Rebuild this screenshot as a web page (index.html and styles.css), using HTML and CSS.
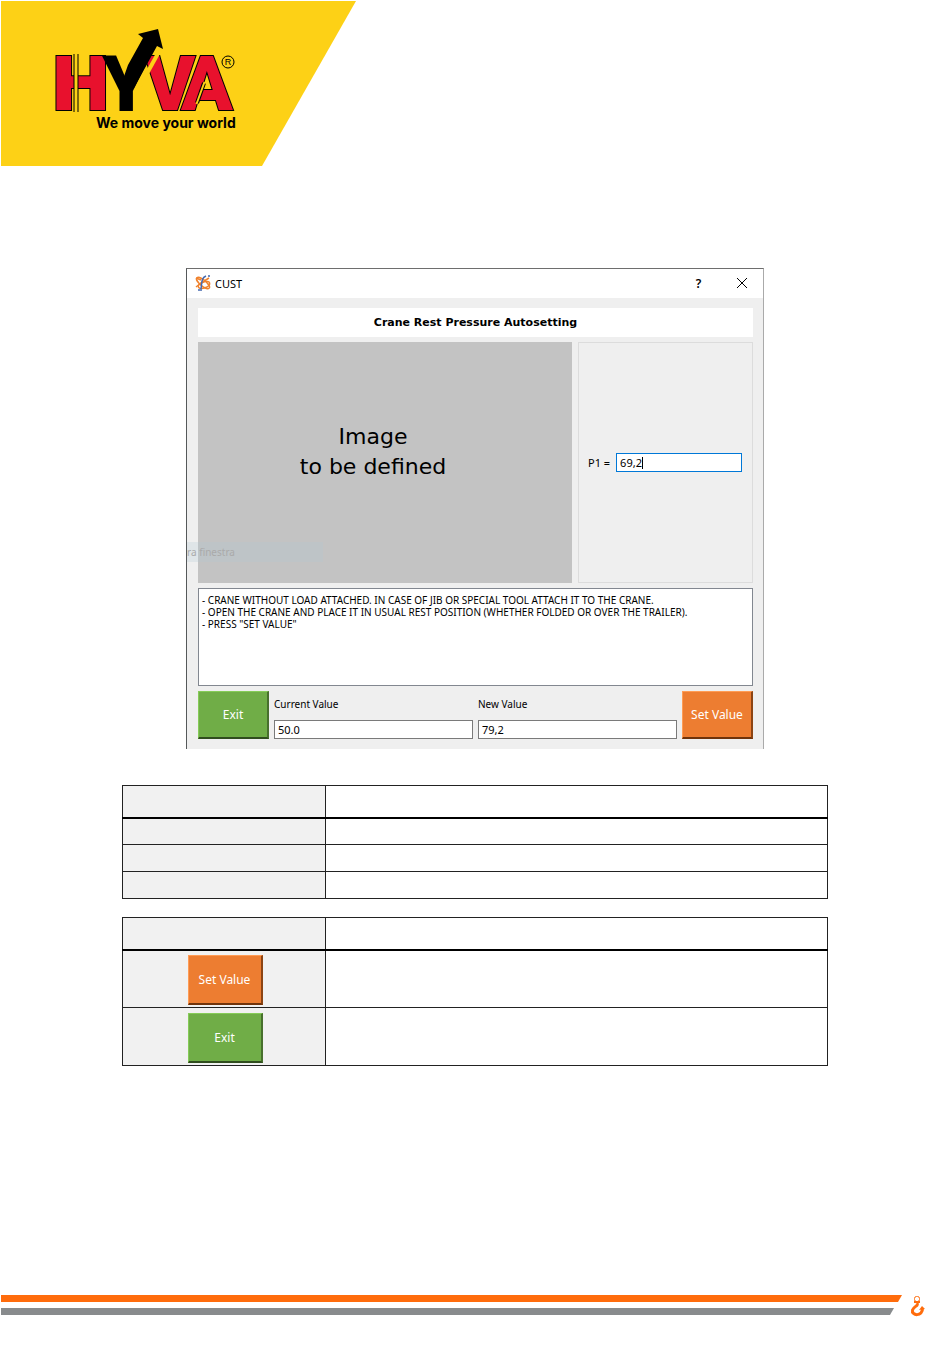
FILE: index.html
```html
<!DOCTYPE html>
<html lang="en">
<head>
<meta charset="utf-8">
<meta name="viewport" content="width=device-width, initial-scale=1">
<title>Crane Rest Pressure Autosetting</title>
<link rel="stylesheet" href="styles.css">
</head>
<body class="page">
<header class="banner">
  <svg class="banner-art" viewBox="0 0 370 166" role="img" aria-label="HYVA, We move your world">
    <polygon points="1,1 356,1 262,166 1,166" fill="#fdd116"/>
    <g class="logo-letters">
      <text class="logo-h" x="53" y="110">H</text>
      <text x="145" y="110">V</text>
      <text x="181" y="110">A</text>
    </g>
    <text class="logo-y" x="102" y="111">Y</text>
    <path d="M161 48 L140 86" stroke="#fdd116" stroke-width="4"/>
    <path d="M128 65 L143 38 L138 34 L158 29 L163 49 L157 46 L134 88 L122 82 Z"/>
    <path d="M76 54 V112" stroke="#000" stroke-width="5"/>
    <path d="M76 53 V113" stroke="#fdd116" stroke-width="3"/>
    <path d="M197 103 L204 83" stroke="#000" stroke-width="4"/>
    <path d="M196.500 104 L204.500 82" stroke="#fdd116" stroke-width="2"/>
    <text class="logo-tagline" x="96" y="128">We move your world</text>
    <circle cx="228" cy="62" r="6" fill="none" stroke="#000"/>
    <text class="logo-mark" x="228" y="65">R</text>
  </svg>
</header>

<main class="content">
  <section class="dialog" aria-labelledby="dialog-name">
    <div class="titlebar">
      <svg class="app-icon" viewBox="0 0 16 16" aria-hidden="true">
        <g fill="none" stroke="#f0822d" stroke-width="1.500">
          <ellipse cx="8" cy="8" rx="8" ry="3" transform="rotate(40 8 8)"/>
          <ellipse cx="9" cy="10" rx="6" ry="3" transform="rotate(-20 9 10)"/>
          <path d="M1 3 L6 5 M1 12 L6 8 M6 8 L14 3"/>
        </g>
        <path d="M11 1 C6 3 7 8 6 14 M3 15 H7 M13 1 H15" fill="none" stroke="#4468b0" stroke-width="1.500"/>
      </svg>
      <span class="dialog-name" id="dialog-name">CUST</span>
      <button class="title-button" type="button">?</button>
      <button class="title-button" type="button" aria-label="Close">
        <svg class="close-icon" viewBox="0 0 10 10"><path d="M0 0 L10 10 M10 0 L0 10" stroke="#000" fill="none"/></svg>
      </button>
    </div>
    <div class="dialog-body">
      <h1 class="heading">Crane Rest Pressure Autosetting</h1>
      <div class="workspace">
        <div class="placeholder">
          <p class="placeholder-line">Image</p>
          <p class="placeholder-line">to be defined</p>
        </div>
        <div class="panel">
          <label class="panel-label" for="p1">P1 =</label>
          <div class="p1-box"><input class="field p1" id="p1" type="text" value="69,2"><span class="caret"></span></div>
        </div>
      </div>
      <textarea class="instructions" aria-label="Instructions" readonly>- CRANE WITHOUT LOAD ATTACHED. IN CASE OF JIB OR SPECIAL TOOL ATTACH IT TO THE CRANE.
- OPEN THE CRANE AND PLACE IT IN USUAL REST POSITION (WHETHER FOLDED OR OVER THE TRAILER).
- PRESS "SET VALUE"</textarea>
      <div class="actions">
        <button class="action exit" type="button">Exit</button>
        <div class="value"><label for="current">Current Value</label><input class="field" id="current" type="text" value="50.0"></div>
        <div class="value"><label for="new">New Value</label><input class="field" id="new" type="text" value="79,2"></div>
        <button class="action set" type="button">Set Value</button>
      </div>
    </div>
    <span class="ghost">ra finestra</span>
  </section>

  <table class="grid">
    <tr class="head-row"><th class="key"></th><th></th></tr>
    <tr><td class="key"></td><td></td></tr>
    <tr><td class="key"></td><td></td></tr>
    <tr><td class="key"></td><td></td></tr>
  </table>

  <table class="grid">
    <tr class="head-row"><th class="key"></th><th></th></tr>
    <tr class="tall"><td class="key"><button class="action sample set" type="button">Set Value</button></td><td></td></tr>
    <tr class="tall"><td class="key"><button class="action sample exit" type="button">Exit</button></td><td></td></tr>
  </table>
</main>

<footer class="footer">
  <div class="bars"><div class="bar bar-orange"></div><div class="bar bar-gray"></div></div>
  <svg class="hook" viewBox="0 0 16 22" aria-hidden="true">
    <g fill="none" stroke="#ff6c0c">
      <rect x="4.500" y="1.500" width="5" height="5" rx="2"/>
      <path d="M4 7 H10" stroke-width="2"/>
      <path d="M7 8 C9 11 4 11 2.500 15 C1 21 13 22 12.500 13" stroke-width="3"/>
    </g>
    <path d="M9 15 L12 11 L15 14 Z" fill="#ff6c0c"/>
  </svg>
</footer>
</body>
</html>
```
FILE: styles.css
```css
* {
  box-sizing: border-box;
}

.page {
  display: flex;
  flex-direction: column;
  min-height: 100vh;
  margin: 0;
  background: #fff;
  color: #000;
  font-family: "Noto Sans", "Open Sans", sans-serif;
  font-size: 11px;
}

.banner-art {
  display: block;
  width: 370px;
  max-width: 100%;
}

.logo-letters {
  fill: #e8112d;
  stroke: #000;
  stroke-width: 2px;
  paint-order: stroke;
  font: 900 76px Roboto, sans-serif;
}

.logo-h {
  font: 900 74px Inter, sans-serif;
}

.logo-y {
  font: 900 77px Roboto, sans-serif;
}

.logo-tagline {
  font: 700 14px Inter, sans-serif;
}

.logo-mark {
  font: 9px "Liberation Sans", sans-serif;
  text-anchor: middle;
}

.content {
  display: flex;
  flex-direction: column;
  align-items: center;
  flex: 1;
  padding: 102px 24px 24px;
}

.dialog {
  position: relative;
  width: 100%;
  max-width: 578px;
  margin-bottom: 36px;
  border: 1px solid #aaa;
  border-top-color: #6e6e6e;
  border-left-color: #55585a;
  border-bottom: 0;
  background: #efefef;
}

.titlebar {
  display: flex;
  align-items: center;
  height: 29px;
  padding: 0 10px 1px 8px;
  background: #fff;
}

.app-icon {
  width: 16px;
  height: 16px;
  margin-right: 4px;
}

.dialog-name {
  flex: 1;
}

.title-button {
  width: 23px;
  margin-left: 20px;
  padding: 0;
  border: 0;
  background: none;
  font: 600 12px "Noto Sans", sans-serif;
}

.close-icon {
  width: 10px;
  height: 10px;
}

.dialog-body {
  display: flex;
  flex-direction: column;
  gap: 5px;
  padding: 10px 10px 10px 11px;
}

.heading {
  margin: 0;
  background: #fff;
  font: 700 11px/29px "DejaVu Sans", sans-serif;
  text-align: center;
}

.workspace {
  display: flex;
  gap: 6px;
  min-height: 241px;
}

.placeholder {
  flex: 1;
  padding: 80px 24px 0 0;
  background: #c3c3c3;
  text-align: center;
}

.placeholder-line {
  margin: 0;
  font: 22px/30px "DejaVu Sans", sans-serif;
}

.panel {
  display: flex;
  align-items: center;
  gap: 6px;
  width: 175px;
  padding: 0 10px 0 9px;
  border: 1px solid #dcdcdc;
}

.panel-label {
  white-space: nowrap;
}

.p1-box {
  position: relative;
  flex: 1;
}

.field {
  display: block;
  width: 100%;
  height: 19px;
  padding: 0 3px;
  border: 1px solid #7a7a7a;
  border-radius: 0;
  background: #fff;
  color: #000;
  font: 11px "Noto Sans", sans-serif;
}

.field.p1 {
  border-color: #0078d7;
}

.caret {
  position: absolute;
  top: 4px;
  left: 26px;
  width: 1px;
  height: 12px;
  background: #000;
}

.instructions {
  display: block;
  height: 98px;
  padding: 5px 3px;
  border: 1px solid #828790;
  background: #fff;
  color: #000;
  font: 10px/12px "Noto Sans", sans-serif;
  resize: none;
}

.actions {
  display: flex;
  gap: 5px;
  height: 48px;
}

.action {
  width: 71px;
  padding: 0;
  border: 1px solid;
  border-right-width: 2px;
  border-bottom-width: 2px;
  color: #fff;
  font: 12px "Noto Sans", sans-serif;
}

.exit {
  border-color: #86cc58 #48702d #304d1e #86cc58;
  background: #70ad47;
}

.set {
  border-color: #ff9c55 #8c4413 #6f330b #ff9c55;
  background: #ed7d31;
}

.value {
  display: flex;
  flex: 1;
  flex-direction: column;
  justify-content: space-between;
  padding-top: 6px;
  font-size: 10px;
}

.ghost {
  position: absolute;
  top: 273px;
  left: 0;
  width: 136px;
  background: rgba(175, 200, 210, 0.25);
  color: #aaa;
  font-size: 10px;
  line-height: 20px;
}

.grid {
  width: 100%;
  max-width: 706px;
  margin-bottom: 18px;
  border: 1px solid #000;
  border-collapse: collapse;
  table-layout: fixed;
}

.grid th,
.grid td {
  height: 27px;
  padding: 0;
  border: 1px solid #222;
}

.grid .head-row th {
  height: 32px;
  border-bottom: 2px solid #000;
}

.grid .tall td {
  height: 58px;
}

.grid .key {
  width: 203px;
  background: #f1f1f1;
  text-align: center;
}

.grid .tall .key {
  padding-top: 2px;
  padding-left: 2px;
}

.sample {
  width: 75px;
  height: 50px;
  vertical-align: middle;
}

.footer {
  display: flex;
  align-items: flex-start;
  gap: 8px;
  padding: 0 24px 31px 1px;
}

.bars {
  flex: 1;
}

.bar {
  height: 7px;
  clip-path: polygon(0 0, 100% 0, calc(100% - 4px) 100%, 0 100%);
}

.bar-orange {
  background: #ff6c0c;
}

.bar-gray {
  margin: 6px 8px 0 0;
  background: #888b8d;
}

.hook {
  width: 16px;
  height: 22px;
}
```
